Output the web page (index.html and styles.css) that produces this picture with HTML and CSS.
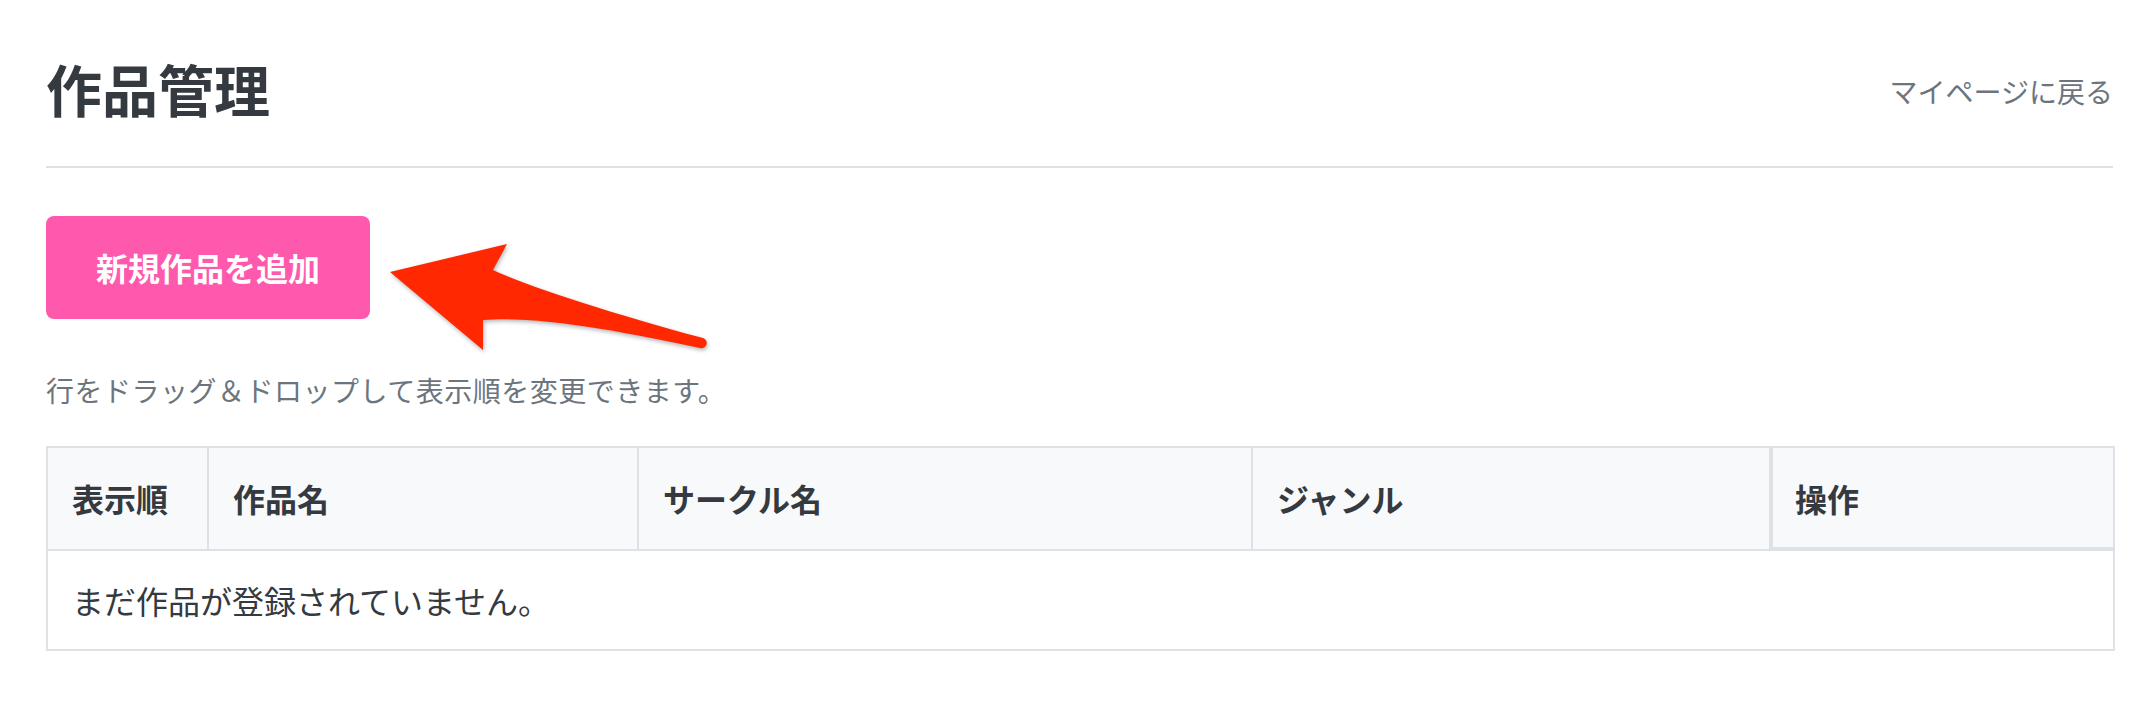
FILE: index.html
```html
<!DOCTYPE html>
<html lang="ja">
<head>
<meta charset="utf-8">
<title>作品管理</title>
<link rel="stylesheet" href="styles.css">
</head>
<body>
<div class="page">
  <header class="page-header">
    <h1 class="page-title">作品管理</h1>
    <a class="back-link" href="#">マイページに戻る</a>
  </header>
  <hr class="divider">
  <div class="toolbar">
    <button class="btn-add" type="button">新規作品を追加</button>
    <svg class="arrow" width="340" height="125" viewBox="0 0 340 125" aria-hidden="true">
      <path d="M10,37 L127,9 L113,35 C145,50 230,78 323,103 A5,5 0 0 1 320,113 C250,98 160,80 103,85 L103,115 Z" fill="#ff2800"/>
    </svg>
  </div>
  <p class="help">行をドラッグ＆ドロップして表示順を変更できます。</p>
  <table class="works">
    <colgroup>
      <col class="c-order">
      <col class="c-name">
      <col class="c-circle">
      <col class="c-genre">
      <col class="c-ops">
    </colgroup>
    <thead>
      <tr>
        <th>表示順</th>
        <th>作品名</th>
        <th>サークル名</th>
        <th>ジャンル</th>
        <th class="ops">操作</th>
      </tr>
    </thead>
    <tbody>
      <tr>
        <td colspan="5">まだ作品が登録されていません。</td>
      </tr>
    </tbody>
  </table>
</div>
</body>
</html>
```

FILE: styles.css
```css
html, body {
  margin: 0;
  padding: 0;
  background: #ffffff;
}

body {
  font-family: "Noto Sans CJK JP", "Noto Sans", sans-serif;
  color: #343a40;
}

.page {
  padding: 54px 39px 40px 46px;
}

.page-header {
  display: flex;
  justify-content: space-between;
  align-items: center;
}

.page-title {
  margin: 0;
  font-size: 56px;
  line-height: 67px;
  font-weight: 700;
  color: #343a40;
}

.back-link {
  font-size: 28px;
  line-height: 42px;
  color: #6c757d;
  text-decoration: none;
  margin-top: 7px;
}

.divider {
  margin: 45px 0 0 0;
  border: 0;
  border-top: 2px solid #dee2e6;
  height: 0;
}

.toolbar {
  position: relative;
  margin-top: 48px;
  display: flex;
}

.btn-add {
  font-family: inherit;
  font-size: 32px;
  font-weight: 700;
  line-height: 49px;
  color: #ffffff;
  background: #ff59ae;
  border: 0;
  border-radius: 8px;
  padding: 27px 50px;
  cursor: pointer;
}

.arrow {
  position: absolute;
  left: 334px;
  top: 19px;
  filter: drop-shadow(1px 2px 2px rgba(0, 0, 0, 0.3));
}

.help {
  margin: 50px 0 0 0;
  font-size: 28px;
  line-height: 42px;
  letter-spacing: 0.5px;
  color: #6c757d;
}

.works {
  margin-top: 35px;
  width: 100%;
  table-layout: fixed;
  border-collapse: collapse;
  font-size: 32px;
}

.c-order { width: 161px; }
.c-name { width: 430px; }
.c-circle { width: 614px; }
.c-genre { width: 518px; }
.c-ops { width: 344px; }

.works th,
.works td {
  border: 2px solid #dee2e6;
  text-align: left;
  color: #343a40;
}

.works th {
  background: #f8f9fa;
  font-weight: 700;
  line-height: 47px;
  padding: 27px 24px;
}

.works th.ops {
  box-shadow: inset 2px -2px 0 #dee2e6;
}

.works td {
  font-weight: 400;
  line-height: 48px;
  padding: 25px 24px;
}
```
